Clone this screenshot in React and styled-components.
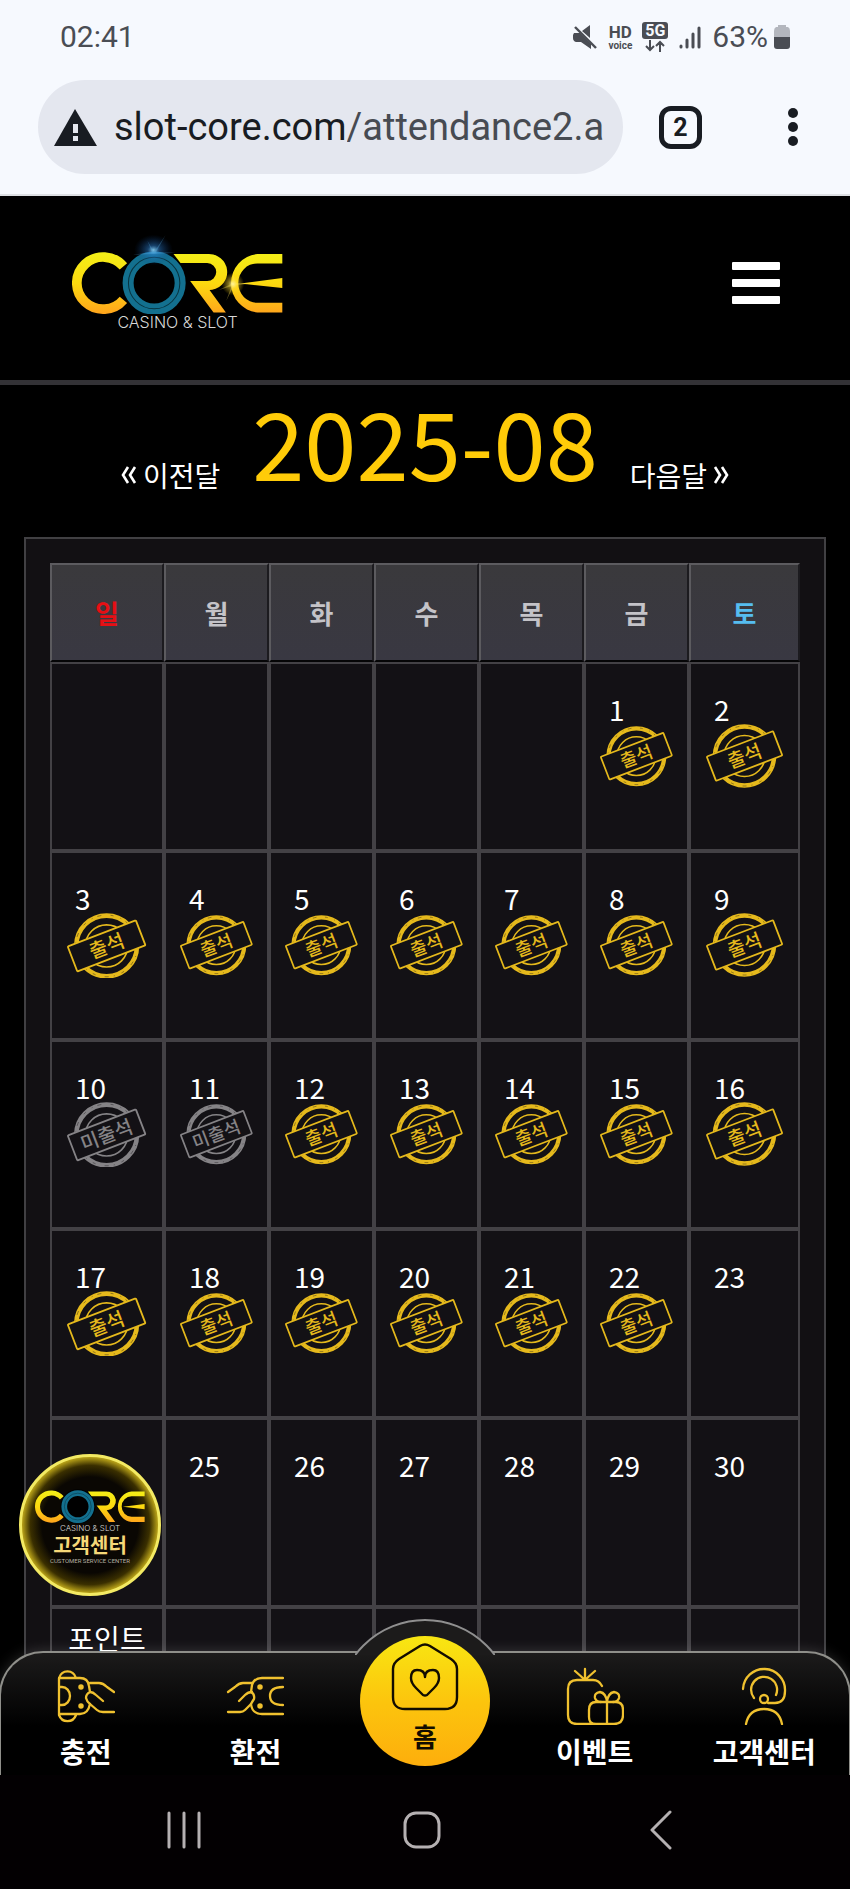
import React, { useState } from 'react'
import styled, { createGlobalStyle, css } from 'styled-components'

const GlobalStyle = createGlobalStyle`
  *, *::before, *::after {
    box-sizing: border-box;
  }

  body {
    margin: 0;
    background: #000;
    color: #fff;
    font-family: 'Noto Sans CJK KR', sans-serif;
  }

  button {
    padding: 0;
    border: none;
    background: transparent;
    color: inherit;
    font-family: inherit;
    cursor: pointer;
  }

  a {
    color: inherit;
    text-decoration: none;
  }

  svg {
    display: block;
    flex-shrink: 0;
  }
`

const Screen = styled.div`
  display: flex;
  flex-direction: column;
  height: 100vh;
  overflow: hidden;
`

/* browser chrome */

const Chrome = styled.header`
  background: #f6f9fe;
  border-bottom: 2px solid #dde0e4;
  font-family: Roboto, sans-serif;
`

const StatusBar = styled.div`
  display: flex;
  align-items: center;
  justify-content: space-between;
  height: 74px;
  padding: 0 59px 0 60px;
  color: #4a4d54;
  font-size: 30px;
  line-height: 36px;
`

const StatusIcons = styled.div`
  display: flex;
  align-items: center;
  gap: 10px;
`

const HdVoice = styled.div`
  display: flex;
  flex-direction: column;
  align-items: center;
  font-size: 17px;
  font-weight: 700;
  line-height: 18px;

  small {
    font-size: 10px;
    line-height: 10px;
  }
`

const Network = styled.div`
  display: flex;
  flex-direction: column;
  align-items: center;
  gap: 1px;

  span {
    width: 26px;
    border-radius: 3px;
    background: #4a4d54;
    color: #f6f9fe;
    font-size: 16px;
    font-weight: 700;
    line-height: 17px;
    text-align: center;
  }
`

const Battery = styled.div`
  display: flex;
  align-items: center;
  gap: 5px;
`

const Toolbar = styled.div`
  display: flex;
  align-items: center;
  padding: 6px 47px 20px 38px;
`

const AddressBar = styled.form`
  flex: 1;
  min-width: 0;
  display: flex;
  align-items: center;
  height: 94px;
  padding: 0 12px 0 16px;
  border-radius: 47px;
  background: #e4e7ef;
  font-size: 38px;
  line-height: 48px;

  label {
    margin-left: 17px;
    color: #181c22;
  }

  input {
    flex: 1;
    min-width: 0;
    padding: 0;
    border: none;
    outline: none;
    background: transparent;
    color: #474b52;
    font: inherit;
  }
`

const TabsButton = styled.button`
  width: 43px;
  height: 43px;
  margin: 0 83px 0 36px;
  border: 5px solid #181c22;
  border-radius: 12px;
  color: #181c22;
  font-size: 25px;
  font-weight: 700;
  line-height: 33px;
`

const MenuDots = styled.button`
  width: 18px;
`

/* site */

const Site = styled.div`
  flex: 1;
  min-height: 0;
  position: relative;
  overflow: hidden;
`

const SiteHeader = styled.div`
  display: flex;
  align-items: center;
  justify-content: space-between;
  height: 189px;
  padding: 0 70px 11px 72px;
  border-bottom: 5px solid #333236;
`

const Brand = styled.a`
  display: flex;
  flex-direction: column;
  align-items: center;
  font-family: Inter, sans-serif;
  font-size: ${props => props.$small ? '8px' : '16px'};
  font-weight: 300;
  line-height: ${props => props.$small ? '10px' : '17px'};
  color: #d8d8d8;

  svg {
    width: ${props => props.$small ? '110px' : '211px'};
    height: auto;
  }
`

const MonthNav = styled.nav`
  display: flex;
  align-items: flex-end;
  justify-content: center;
  gap: 32px;
  padding: 3px 0 45px;
`

const MonthLink = styled.a`
  display: flex;
  align-items: center;
  gap: 6px;
  font-size: 28px;
  line-height: 34px;
`

const MonthTitle = styled.h1`
  margin: 0;
  color: #ffcb08;
  font-size: 94px;
  font-weight: 400;
  line-height: 104px;
`

const Panel = styled.section`
  margin: 0 24px;
  padding: 24px;
  border: 2px solid #414043;
  background: #121013;
`

const Calendar = styled.table`
  width: 100%;
  table-layout: fixed;
  border-spacing: 0;
`

const Weekday = styled.th`
  width: ${props => props.width};
  height: 99px;
  padding: 0;
  border: 2px solid;
  border-color: #5c5b5f #1c1b1f #050506 #5c5b5f;
  background: linear-gradient(#3a393c, #393842);
  color: ${props => props.color};
  font-size: 26px;
  font-weight: 700;
  line-height: 40px;
`

const cell = css`
  border: 2px solid #434145;
  background: #131115;
`

const DayCell = styled.td`
  ${cell}
  height: 189px;
  padding: 0;
`

/* number and stamp share one grid area, the stamp stays centred */
const Day = styled.div`
  display: grid;
  height: 185px;

  > * {
    grid-area: 1 / 1;
  }
`

const DayNumber = styled.span`
  padding: 31px 0 0 23px;
  font-size: 28px;
  line-height: 28px;
`

const StampBox = styled.div`
  width: 72%;
  place-self: center;
  color: ${props => props.$missed ? '#858386' : '#e5b91c'};

  svg {
    width: 100%;
    height: auto;
  }
`

const TotalCell = styled.td`
  ${cell}
  height: 189px;
  padding: 15px 0 0;
  font-size: 28px;
  line-height: 28px;
  text-align: center;
  vertical-align: top;
`

const SupportButton = styled.button`
  position: absolute;
  left: 19px;
  bottom: 179px;
  display: flex;
  flex-direction: column;
  align-items: center;
  width: 142px;
  height: 142px;
  padding-top: 24px;
  border: 3px solid #f3ea63;
  border-radius: 50%;
  background: radial-gradient(circle, #0a0703 50%, #3a2f00 62%, #b09a16 70%);

  strong {
    color: #f5d778;
    font-size: 20px;
    line-height: 24px;
  }

  small {
    color: #b5b0a2;
    font-family: Roboto, sans-serif;
    font-size: 6px;
    line-height: 7px;
  }
`

/* bottom navigation */

const TabBar = styled.nav`
  position: absolute;
  left: -1px;
  right: -1px;
  bottom: 0;
  display: grid;
  grid-template-columns: repeat(5, 1fr);
  height: 124px;
  border: 2px solid #8f8f8a;
  border-bottom: none;
  border-radius: 44px 44px 0 0;
  background: linear-gradient(#1c1b1b, #000 60%);
  box-shadow: 0 0 14px rgba(255, 255, 255, 0.16);
`

const Bump = styled.div`
  position: absolute;
  left: 50%;
  top: -36px;
  width: 140px;
  height: 38px;
  margin-left: -70px;
  overflow: hidden;

  &::before {
    content: '';
    position: absolute;
    left: -18px;
    top: 2px;
    width: 176px;
    height: 176px;
    border: 2px solid #8f8f8f;
    border-radius: 50%;
    background: #1c1b1b;
  }
`

const Tab = styled.a`
  display: flex;
  flex-direction: column;
  align-items: center;
  gap: 6px;
  padding-top: 14px;
  font-size: 28px;
  font-weight: 700;
  line-height: 40px;
  white-space: nowrap;
`

const HomeTab = styled(Tab)`
  position: relative;
  justify-self: center;
  width: 130px;
  height: 130px;
  margin-top: -17px;
  padding-top: 7px;
  border-radius: 50%;
  background: linear-gradient(#f8e712, #fcc50d 50%, #fdae0c);
  color: #120c00;
  font-size: 26px;
  line-height: 38px;
`

const SystemNav = styled.footer`
  display: grid;
  grid-template-columns: repeat(3, 1fr);
  height: 114px;
  padding: 0 70px 4px 65px;
  background: #030002;

  button {
    display: grid;
    place-items: center;
  }
`

const YELLOW = '#f0c12f'

const WEEKDAYS = [
  { name: '일', color: '#e60f14', width: '15.2%' },
  { name: '월', color: '#c4c3c8', width: '14%' },
  { name: '화', color: '#c4c3c8', width: '14%' },
  { name: '수', color: '#c4c3c8', width: '14%' },
  { name: '목', color: '#c4c3c8', width: '14%' },
  { name: '금', color: '#c4c3c8', width: '14%' },
  { name: '토', color: '#56bdf0', width: '14.8%' },
]

const FIRST_WEEKDAY = 5
const LAST_ATTENDED = 22
const MISSED = [10, 11]
const SUPPORT_DAY = 24

const weeks = Array.from({ length: 5 }, (_, week) =>
  Array.from({ length: 7 }, (_, day) => week * 7 + day - FIRST_WEEKDAY + 1)
)

const CoreLogo = ({ id, flares }) => (
  <svg viewBox="0 0 632 242" role="img" aria-label="CORE">
    <defs>
      <linearGradient id={`${id}-gold`} gradientUnits="userSpaceOnUse" x1="0" y1="55" x2="0" y2="240">
        <stop offset="0" stopColor="#f3ef18" />
        <stop offset="0.5" stopColor="#fcd90f" />
        <stop offset="1" stopColor="#ffa41c" />
      </linearGradient>
      <radialGradient id={`${id}-blue`}>
        <stop offset="0" stopColor="#8fdcff" stopOpacity="0.9" />
        <stop offset="0.3" stopColor="#2b7fd0" stopOpacity="0.5" />
        <stop offset="1" stopColor="#0a3a80" stopOpacity="0" />
      </radialGradient>
      <radialGradient id={`${id}-flare`}>
        <stop offset="0" stopColor="#fffbc0" />
        <stop offset="0.4" stopColor="#ffe03a" stopOpacity="0.5" />
        <stop offset="1" stopColor="#ffd000" stopOpacity="0" />
      </radialGradient>
    </defs>
    <path d="M154 97 A79 78 0 1 0 154 197" fill="none" stroke={`url(#${id}-gold)`} strokeWidth="29" />
    <circle cx="246" cy="147" r="100" fill="#000" />
    <circle cx="246" cy="147" r="78" fill="none" stroke="#13708f" strokeWidth="33" />
    <circle cx="246" cy="147" r="77" fill="none" stroke="#07333f" strokeWidth="3" />
    <g fill={`url(#${id}-gold)`}>
      <path d="M304 60 H407 A55 54 0 0 1 420 167 L412 168 L461 235 H424 L354 141 H405 A27 27 0 0 0 405 87 H325 Z" />
      <path d="M630 60 H555 A88 88 0 0 0 555 235 H630 V206 H555 A57 59 0 0 1 555 88 H630 Z" />
      <path d="M505 148 L630 132 V162 Z" />
    </g>
    {flares ? (
      <>
        <ellipse cx="244" cy="48" rx="58" ry="46" fill={`url(#${id}-blue)`} />
        <path d="M180 62 L244 54 L310 56 L244 60 Z M244 56 L280 4 L250 58 Z M240 56 L226 20 L246 54 Z" fill="#5db4e8" opacity="0.3" />
        <circle cx="482" cy="150" r="34" fill={`url(#${id}-flare)`} />
        <path d="M440 168 L484 146 L540 148 L484 154 Z M484 110 L488 150 L462 200 L480 150 Z" fill="#ffe65a" opacity="0.35" />
      </>
    ) : null}
  </svg>
)

const Stamp = ({ missed }) => (
  <StampBox $missed={missed}>
    <svg viewBox="0 0 77 64">
      <g fill="none" stroke="currentColor">
        <circle cx="38.5" cy="32" r="29.5" strokeWidth="4.5" />
        <circle cx="38.5" cy="32" r="20.5" strokeWidth="1.6" />
        <circle cx="38.5" cy="32" r="30" stroke="#131115" strokeWidth="0.8" strokeDasharray="3 7 1 5 4 9" opacity="0.5" />
      </g>
      <g transform="rotate(-21 38.5 32)">
        <rect x="3" y="19" width="71" height="26" rx="1" fill="#131115" stroke="currentColor" strokeWidth="1.8" />
        <text
          x="38.5"
          y="39"
          fill="currentColor"
          textAnchor="middle"
          fontSize="19"
          fontWeight="500"
        >
          {missed ? '미출석' : '출석'}
        </text>
      </g>
    </svg>
  </StampBox>
)

const Chevrons = ({ next }) => (
  <svg width="16" height="20" viewBox="0 0 16 20" fill="none" stroke="#fff" strokeWidth="2.6">
    <path d={next ? 'M2 2 L7 10 L2 18 M9 2 L14 10 L9 18' : 'M7 2 L2 10 L7 18 M14 2 L9 10 L14 18'} />
  </svg>
)

const LineIcon = ({ children }) => (
  <svg width="58" height="58" viewBox="0 0 58 58" fill="none" stroke={YELLOW} strokeWidth="2.3" strokeLinecap="round" strokeLinejoin="round">
    {children}
  </svg>
)

const DepositIcon = () => (
  <LineIcon>
    <path d="M2 11 V48 M2 11 A9 10 0 0 1 19 11 M2 48 A9 9 0 0 0 19 48 M2 11 H23 Q31 11 32 19 L33 25 Q29 27 29 31 Q30 35 33 37 Q31 47 23 47 H2 M2 20 H5 A8 9 0 0 1 5 38 H2" />
    <path d="M33 16 H42 Q46 16 50 20 L57 25 M33 25 Q36 25 39 28 L46 34 M33 37 L40 43 Q42 45 46 45 H57" />
    <circle cx="24" cy="20" r="1.6" fill={YELLOW} />
    <circle cx="24" cy="39" r="1.6" fill={YELLOW} />
  </LineIcon>
)

const WithdrawIcon = () => (
  <LineIcon>
    <path d="M57 11 H36 Q28 11 26 18 L25 25 Q29 27 28 32 Q26 35 25 37 Q26 47 36 47 H57 M57 20 Q44 20 44 29 Q44 38 57 38" />
    <path d="M26 16 H17 Q13 16 9 20 L2 25 M26 25 Q22 25 19 28 L13 34 M25 37 L19 43 Q17 45 14 45 H2" />
    <circle cx="34" cy="20" r="1.6" fill={YELLOW} />
    <circle cx="34" cy="39" r="1.6" fill={YELLOW} />
  </LineIcon>
)

const EventIcon = () => (
  <LineIcon>
    <path d="M19 12 V2 M18 12 L9 4 M20 12 L29 4 M36 19 Q33 13 27 13 H11 Q2 13 2 22 V48 Q2 57 11 57 H48 Q57 57 57 48 V43 Q57 35 50 35 H30 Q23 35 23 43 V50 Q23 57 30 57" />
    <path d="M41 35 V57 M41 35 Q40 26 34 25 Q28 26 29 31 Q30 35 35 35 M41 35 Q42 26 48 25 Q54 26 53 31 Q52 35 47 35" />
  </LineIcon>
)

const SupportIcon = () => (
  <LineIcon>
    <path d="M8 22 A21 21 0 0 1 50 24 Q50 36 40 36 H33" />
    <path d="M19 31 A13 13 0 1 1 41 28" />
    <circle cx="29" cy="32" r="4" />
    <path d="M11 57 Q14 42 29 42 Q44 42 47 57" />
  </LineIcon>
)

const HomeIcon = () => (
  <svg width="68" height="68" viewBox="0 0 68 68" fill="none" stroke="#120c00" strokeWidth="2.4" strokeLinecap="round" strokeLinejoin="round">
    <path d="M29 3 Q34 0 39 3 L60 16 Q66 20 66 26 V54 Q66 66 54 66 H14 Q2 66 2 54 V26 Q2 20 8 16 Z" />
    <path d="M34 34 Q34 27 26 27 Q20 27 20 35 Q20 40 25 45 L32 52 Q34 53 36 52 L43 45 Q48 40 48 35 Q48 27 42 27 Q34 27 34 34 Z" />
  </svg>
)

const App = () => {
  const [path, setPath] = useState('/attendance2.a')

  return (
    <Screen>
      <GlobalStyle />
      <Chrome>
        <StatusBar>
          <time>02:41</time>
          <StatusIcons>
            <svg width="26" height="26" viewBox="0 0 26 26" fill="#4a4d54">
              <path d="M2 9 H8 L11 12 L19 20 V25 L9 18 H4 Q1 17 1 14 V11 Z M10 7 L18 1 V14 Z" />
              <path d="M3 3 L24 24" stroke="#4a4d54" strokeWidth="2.4" />
            </svg>
            <HdVoice>
              HD
              <small>voice</small>
            </HdVoice>
            <Network>
              <span>5G</span>
              <svg width="20" height="12" viewBox="0 0 20 12" fill="none" stroke="#4a4d54" strokeWidth="2">
                <path d="M5 0 V10 M1 6 L5 10 L9 6 M15 12 V2 M11 6 L15 2 L19 6" />
              </svg>
            </Network>
            <svg width="24" height="24" viewBox="0 0 24 24" stroke="#4a4d54" strokeWidth="3" strokeLinecap="round">
              <path d="M3 21 V22 M9 15 V22 M15 9 V22 M21 3 V22" />
            </svg>
            <Battery>
              63%
              <svg width="18" height="26" viewBox="0 0 18 26">
                <path d="M5 1 H13 V3 H15 Q17 4 17 7 V13 H1 V7 Q1 4 3 3 H5 Z" fill="#b4b7be" />
                <path d="M1 13 H17 V22 Q17 25 14 25 H4 Q1 25 1 22 Z" fill="#4a4d54" />
              </svg>
            </Battery>
          </StatusIcons>
        </StatusBar>
        <Toolbar>
          <AddressBar onSubmit={e => e.preventDefault()}>
            <svg width="43" height="37" viewBox="0 0 43 37">
              <path d="M21 0 L43 37 H0 Z" fill="#181c22" />
              <path d="M19 15 H24 V24 H19 Z M19 27 H24 V32 H19 Z" fill="#e4e7ef" />
            </svg>
            <label htmlFor="address">slot-core.com</label>
            <input id="address" value={path} onChange={e => setPath(e.target.value)} />
          </AddressBar>
          <TabsButton aria-label="2 open tabs">2</TabsButton>
          <MenuDots aria-label="Browser menu">
            <svg width="18" height="42" viewBox="0 0 18 42" fill="#181c22">
              <circle cx="8" cy="7" r="5" />
              <circle cx="8" cy="21" r="5" />
              <circle cx="8" cy="35" r="5" />
            </svg>
          </MenuDots>
        </Toolbar>
      </Chrome>

      <Site>
        <SiteHeader>
          <Brand href="#">
            <CoreLogo id="header" flares />
            CASINO &amp; SLOT
          </Brand>
          <button aria-label="메뉴">
            <svg width="48" height="42" viewBox="0 0 48 42" fill="#fff">
              <rect width="48" height="8" rx="1" />
              <rect y="17" width="48" height="8" rx="1" />
              <rect y="34" width="48" height="8" rx="1" />
            </svg>
          </button>
        </SiteHeader>

        <MonthNav>
          <MonthLink href="#prev">
            <Chevrons />
            이전달
          </MonthLink>
          <MonthTitle>2025-08</MonthTitle>
          <MonthLink href="#next">
            다음달
            <Chevrons next />
          </MonthLink>
        </MonthNav>

        <Panel>
          <Calendar>
            <thead>
              <tr>
                {WEEKDAYS.map(day => (
                  <Weekday key={day.name} scope="col" color={day.color} width={day.width}>{day.name}</Weekday>
                ))}
              </tr>
            </thead>
            <tbody>
              {weeks.map((week, i) => (
                <tr key={i}>
                  {week.map(day => (
                    <DayCell key={day}>
                      <Day>
                        {day > 0 && day !== SUPPORT_DAY ? <DayNumber>{day}</DayNumber> : null}
                        {day > 0 && day <= LAST_ATTENDED ? <Stamp missed={MISSED.includes(day)} /> : null}
                      </Day>
                    </DayCell>
                  ))}
                </tr>
              ))}
              <tr>
                <TotalCell>포인트</TotalCell>
                {WEEKDAYS.slice(1).map(day => <TotalCell key={day.name} />)}
              </tr>
            </tbody>
          </Calendar>
        </Panel>

        <SupportButton>
          <Brand as="span" $small>
            <CoreLogo id="support" />
            CASINO &amp; SLOT
          </Brand>
          <strong>고객센터</strong>
          <small>CUSTOMER SERVICE CENTER</small>
        </SupportButton>

        <TabBar>
          <Bump />
          <Tab href="#deposit">
            <DepositIcon />
            충전
          </Tab>
          <Tab href="#withdraw">
            <WithdrawIcon />
            환전
          </Tab>
          <HomeTab href="#home">
            <HomeIcon />
            홈
          </HomeTab>
          <Tab href="#event">
            <EventIcon />
            이벤트
          </Tab>
          <Tab href="#support">
            <SupportIcon />
            고객센터
          </Tab>
        </TabBar>
      </Site>

      <SystemNav>
        <button aria-label="Recent apps">
          <svg width="34" height="38" viewBox="0 0 34 38" stroke="#b5b0b2" strokeWidth="3" strokeLinecap="round">
            <path d="M2 2 V36 M17 2 V36 M32 2 V36" />
          </svg>
        </button>
        <button aria-label="Home">
          <svg width="38" height="38" viewBox="0 0 38 38" fill="none" stroke="#b5b0b2" strokeWidth="3">
            <rect x="2" y="2" width="34" height="34" rx="11" />
          </svg>
        </button>
        <button aria-label="Back">
          <svg width="22" height="40" viewBox="0 0 22 40" fill="none" stroke="#b5b0b2" strokeWidth="3" strokeLinecap="round" strokeLinejoin="round">
            <path d="M20 2 L2 20 L20 38" />
          </svg>
        </button>
      </SystemNav>
    </Screen>
  )
}

export default App
